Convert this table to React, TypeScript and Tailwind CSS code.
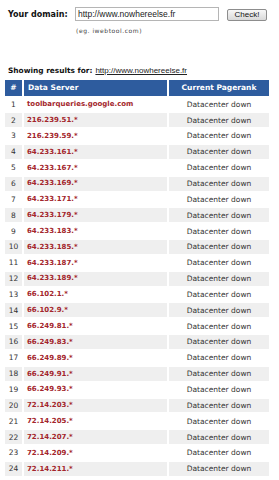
import React from "react";

const servers = [
  "toolbarqueries.google.com",
  "216.239.51.*",
  "216.239.59.*",
  "64.233.161.*",
  "64.233.167.*",
  "64.233.169.*",
  "64.233.171.*",
  "64.233.179.*",
  "64.233.183.*",
  "64.233.185.*",
  "64.233.187.*",
  "64.233.189.*",
  "66.102.1.*",
  "66.102.9.*",
  "66.249.81.*",
  "66.249.83.*",
  "66.249.89.*",
  "66.249.91.*",
  "66.249.93.*",
  "72.14.203.*",
  "72.14.205.*",
  "72.14.207.*",
  "72.14.209.*",
  "72.14.211.*",
];

export default function App() {
  return (
    <div
      className="w-[279px] h-[480px] overflow-hidden bg-white text-[#222]"
      style={{ fontFamily: '"DejaVu Sans", Verdana, sans-serif' }}
    >
      <div className="flex items-start pt-[7px]">
        <div className="w-[75px] shrink-0 whitespace-nowrap pl-[8px] pt-[2px] text-[8px] font-bold leading-[12px] text-[#111]">
          Your domain:
        </div>
        <div className="flex flex-col">
          <div className="flex items-start">
            <div
              className="w-[144px] h-[14px] border border-[#b5b5b5] bg-white pl-[2px] text-[8.5px] leading-[12px] text-[#222] whitespace-nowrap"
              style={{ fontFamily: '"Liberation Sans", Arial, sans-serif' }}
            >
              http://www.nowhereelse.fr
            </div>
            <div
              className="ml-[8px] mt-[2px] w-[40px] h-[12px] rounded-[2px] border border-[#8d8d8d] bg-gradient-to-b from-[#f7f7f7] to-[#d9d9d9] text-center text-[8px] leading-[10px] text-[#111]"
              style={{ fontFamily: '"Liberation Sans", Arial, sans-serif' }}
            >
              Check!
            </div>
          </div>
          <div className="pl-[1px] pt-[6px] text-[6px] leading-[8px] text-[#444] tracking-[0.55px] whitespace-nowrap">
            (eg. iwebtool.com)
          </div>
        </div>
      </div>

      <div className="mt-[30px] pl-[8px] flex items-baseline gap-[3px] leading-[12px] whitespace-nowrap">
        <span className="text-[7.4px] font-bold text-[#111]">Showing results for:</span>
        <span
          className="text-[8px] underline text-[#222]"
          style={{ fontFamily: '"Liberation Sans", Arial, sans-serif' }}
        >
          http://www.nowhereelse.fr
        </span>
      </div>

      <table className="ml-[3px] mt-[1px] border-separate border-spacing-[2px] text-[7.5px]">
        <thead>
          <tr className="h-[15.5px]">
            <th className="w-[17px] bg-[#2e5c9e] text-white font-bold text-center p-0">#</th>
            <th className="w-[143px] bg-[#2e5c9e] text-white font-bold text-left pl-[4px] p-0">
              Data Server
            </th>
            <th className="w-[100px] bg-[#2e5c9e] text-white font-bold text-center p-0">
              Current Pagerank
            </th>
          </tr>
        </thead>
        <tbody>
          {servers.map((s, i) => {
            const bg = i % 2 === 1 ? "bg-[#efefef]" : "bg-white";
            return (
              <tr key={s} className="h-[13.85px]">
                <td className={`${bg} text-center p-0 text-[#333]`}>{i + 1}</td>
                <td className={`${bg} pl-[3px] p-0 font-bold text-[7px] text-[#a3252b]`}>{s}</td>
                <td className={`${bg} text-center p-0 text-[#333]`}>Datacenter down</td>
              </tr>
            );
          })}
        </tbody>
      </table>
    </div>
  );
}
